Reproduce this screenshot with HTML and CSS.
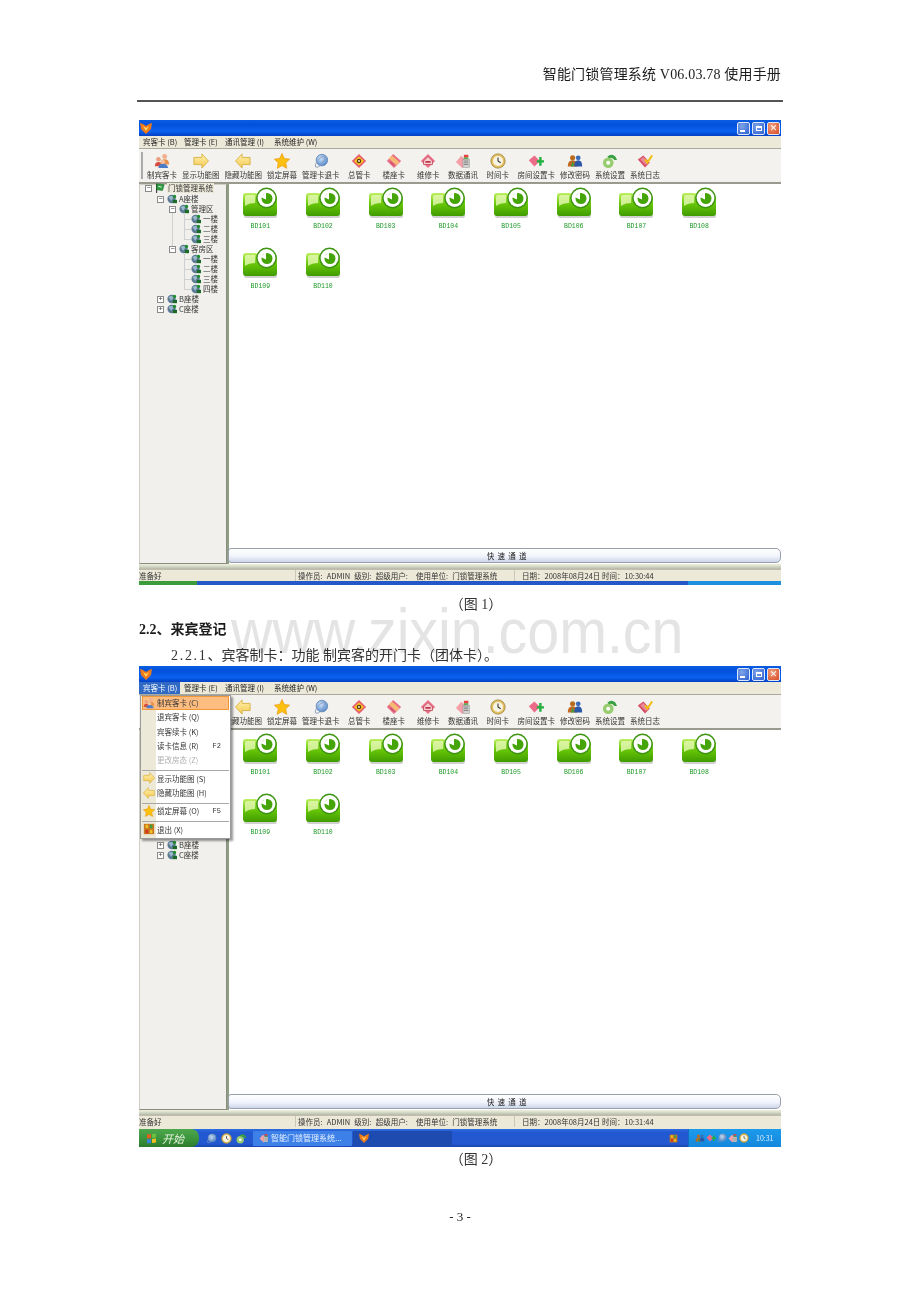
FILE: index.html
```html
<!DOCTYPE html>
<html lang="zh-CN">
<head>
<meta charset="utf-8">
<title>智能门锁管理系统 使用手册</title>
<link rel="stylesheet" href="styles.css">
</head>
<body>
<svg class="defs" width="0" height="0" aria-hidden="true">
  <defs>
    <linearGradient id="gf" x1="0" y1="0" x2="0" y2="1"><stop offset="0" stop-color="#bdf060"/><stop offset=".5" stop-color="#66c408"/><stop offset="1" stop-color="#3f9c00"/></linearGradient>
    <linearGradient id="gy" x1="0" y1="0" x2="0" y2="1"><stop offset="0" stop-color="#fff2b0"/><stop offset="1" stop-color="#f4c850"/></linearGradient>
    <radialGradient id="gg" cx=".4" cy=".35" r=".7"><stop offset="0" stop-color="#cfe4fa"/><stop offset="1" stop-color="#4c86cc"/></radialGradient>
    <symbol id="i-folder" viewBox="0 0 34 31">
      <rect x="1" y="10" width="33" height="21" rx="2" fill="#8a8a8a" opacity=".4"/>
      <path d="M0 9q0-3 3-3h9q2 0 3 2h16q3 0 3 3v15q0 3-3 3H3q-3 0-3-3z" fill="url(#gf)"/>
      <path d="M2 10q0-2 2-2h8v8q-6 0-10 3z" fill="#e6f9b4" opacity=".8"/>
      <circle cx="23.500" cy="11" r="10.400" fill="#3c9410"/>
      <circle cx="23.500" cy="11" r="8.900" fill="#fff"/>
      <circle cx="24" cy="11.500" r="5.500" fill="#45a408"/>
      <path d="M17.500 10l5.500-5v7.500z" fill="#fff"/>
    </symbol>
    <symbol id="i-people" viewBox="0 0 18 18">
      <circle cx="5" cy="7" r="2.600" fill="#e8a080"/><path d="M1 15q0-5 4-5t4 5z" fill="#d84c3c"/>
      <circle cx="12" cy="4" r="2.800" fill="#f0b090"/><path d="M7 13q0-6 5-6t5 6z" fill="#e8904c"/>
      <path d="M5 17q0-5 5-5t6 5z" fill="#4c7cc8"/><circle cx="10" cy="10" r="2.400" fill="#f0c0a0"/>
    </symbol>
    <symbol id="i-right" viewBox="0 0 18 18"><path d="M1 5h9V1l7.400 8L10 17v-4H1z" fill="url(#gy)" stroke="#d8b040" stroke-linejoin="round"/></symbol>
    <symbol id="i-left" viewBox="0 0 18 18"><path d="M17 5H8V1L.6 9 8 17v-4h9z" fill="url(#gy)" stroke="#d8b040" stroke-linejoin="round"/></symbol>
    <symbol id="i-star" viewBox="0 0 18 18"><path d="M9 .5l2.600 5.600 6 .8-4.400 4.200 1.200 6.200L9 14.200l-5.400 3.100 1.200-6.200L.4 6.900l6-.8z" fill="#fcc010" stroke="#e89000" stroke-width=".7"/></symbol>
    <symbol id="i-globe" viewBox="0 0 18 18"><circle cx="10" cy="8" r="6.500" fill="url(#gg)" stroke="#6a8cb8"/><ellipse cx="8" cy="10" rx="7.500" ry="3" fill="none" stroke="#8a9cb8" transform="rotate(-50 8 10)"/></symbol>
    <symbol id="i-eye" viewBox="0 0 18 18"><path d="M9 1l8 8-8 8-8-8z" fill="#e85c70"/><path d="M3.500 9L9 4l5.500 5L9 14z" fill="#f8c820"/><circle cx="9" cy="9" r="2.500" fill="#5c3808"/><circle cx="9" cy="9" r="1" fill="#fff"/></symbol>
    <symbol id="i-tag" viewBox="0 0 18 18"><path d="M8 1l9 8-8 8-8-8z" fill="#ea6c86"/><path d="M3 6l4-3 8 7-3 4z" fill="#f6c870" opacity=".85"/><path d="M5 10l4 4" stroke="#a83850"/></symbol>
    <symbol id="i-house" viewBox="0 0 18 18"><path d="M9 1l8 8-8 8-8-8z" fill="#ec7088"/><path d="M4 9l5-5 5 5v4H4z" fill="#f8d0d0" stroke="#b03850" stroke-width=".8"/><rect x="6" y="9" width="6" height="2" fill="#c03850"/></symbol>
    <symbol id="i-data" viewBox="0 0 18 18"><path d="M7 3l8 7-7 7-7-7z" fill="#f4a0a8"/><rect x="9" y="7" width="7" height="9" fill="#d8d8d8" stroke="#888" stroke-width=".6"/><path d="M10 9h5M10 11h5M10 13h5" stroke="#777"/><rect x="10" y="2" width="5" height="3" fill="#e84040"/><rect x="10" y="5" width="5" height="1.500" fill="#30a030"/></symbol>
    <symbol id="i-clock" viewBox="0 0 18 18"><circle cx="9" cy="9" r="8" fill="#e4c060" stroke="#a08840"/><circle cx="9" cy="9" r="5.600" fill="#f8f4e4"/><path d="M9 5v4l3 2" fill="none" stroke="#333" stroke-width="1.200"/></symbol>
    <symbol id="i-room" viewBox="0 0 20 18"><path d="M1 8l7-6 7 7-7 7z" fill="#ec6c88"/><path d="M11 8h3V4h3v4h3v3h-3v4h-3v-4h-3z" fill="#20b040"/></symbol>
    <symbol id="i-pass" viewBox="0 0 20 18"><circle cx="7" cy="5" r="3.200" fill="#b86c20"/><path d="M1 16q0-8 6-8t6 8z" fill="#c06820"/><circle cx="14" cy="5" r="3" fill="#3c6cb8"/><path d="M9 16q0-8 5-8t5 8z" fill="#2c58a8"/><path d="M5 16l2-7 2 7z" fill="#38a040"/></symbol>
    <symbol id="i-gear" viewBox="0 0 18 18"><circle cx="7" cy="11" r="6" fill="#98cc70"/><circle cx="7" cy="11" r="2.200" fill="#fff"/><path d="M6 4q5-4 9 0l2 4h-3q-3-4-6-2z" fill="#38a040"/></symbol>
    <symbol id="i-log" viewBox="0 0 20 18"><path d="M1 7l7-5 8 9-6 6z" fill="#d85068"/><path d="M4 7l4-3 6 7-3 3z" fill="#e88898"/><path d="M10 7l3 4 6-9" fill="none" stroke="#f0c010" stroke-width="2.400"/></symbol>
    <symbol id="i-node" viewBox="0 0 12 12"><circle cx="5.500" cy="6" r="5" fill="#5c7c96"/><path d="M2 4q3-3 6 0l-3 4z" fill="#9cb8cc"/><circle cx="9" cy="3" r="2" fill="#1f8c30"/><rect x="7" y="7" width="5" height="4" fill="#1a6a28"/></symbol>
    <symbol id="i-flag" viewBox="0 0 12 12"><path d="M2 1v11" stroke="#222" stroke-width="1.200"/><path d="M2 1l9 1-2 7-7-1z" fill="#2ca040" stroke="#145c20" stroke-width=".6"/><path d="M4 4l4 1" stroke="#fff"/></symbol>
    <symbol id="i-logo" viewBox="0 0 12 12"><path d="M0 1l3 1 3 2 3-2 3-1-1 6-5 5-5-5z" fill="#ee7a18"/><path d="M3 4l3 5 3-5-3 2z" fill="#ffd870"/></symbol>
    <symbol id="i-door" viewBox="0 0 14 14"><rect x="1" y="1" width="12" height="12" fill="#c87820"/><rect x="3" y="2" width="3" height="4" fill="#f0c020"/><rect x="8" y="2" width="3" height="4" fill="#38a040"/><rect x="3" y="8" width="3" height="4" fill="#d83020"/><rect x="8" y="8" width="3" height="4" fill="#f0c020"/></symbol>
  </defs>
</svg>

<div class="watermark">www.zixin.com.cn</div>

<main class="page">
  <header class="doc-head">智能门锁管理系统 V06.03.78 使用手册</header>

  <section class="win win-one">
    <div class="title"><svg class="logo"><use href="#i-logo"/></svg><div class="caps"><span class="cap cap-blue"><i class="g-min"></i></span><span class="cap cap-blue"><i class="g-max"></i></span><span class="cap cap-red">✕</span></div></div>
    <nav class="menubar"><span>宾客卡 (B)</span><span>管理卡 (E)</span><span>通讯管理 (I)</span><span>系统维护 (W)</span></nav>
    <div class="toolbar">
      <div class="tool"><svg><use href="#i-people"/></svg>制宾客卡</div>
      <div class="tool"><svg><use href="#i-right"/></svg>显示功能图</div>
      <div class="tool"><svg><use href="#i-left"/></svg>隐藏功能图</div>
      <div class="tool"><svg><use href="#i-star"/></svg>锁定屏幕</div>
      <div class="tool"><svg><use href="#i-globe"/></svg>管理卡退卡</div>
      <div class="tool"><svg><use href="#i-eye"/></svg>总管卡</div>
      <div class="tool"><svg><use href="#i-tag"/></svg>楼座卡</div>
      <div class="tool"><svg><use href="#i-house"/></svg>维修卡</div>
      <div class="tool"><svg><use href="#i-data"/></svg>数据通讯</div>
      <div class="tool"><svg><use href="#i-clock"/></svg>时间卡</div>
      <div class="tool"><svg><use href="#i-room"/></svg>房间设置卡</div>
      <div class="tool"><svg><use href="#i-pass"/></svg>修改密码</div>
      <div class="tool"><svg><use href="#i-gear"/></svg>系统设置</div>
      <div class="tool"><svg><use href="#i-log"/></svg>系统日志</div>
    </div>
    <div class="body">
      <aside class="tree">
        <div class="row root"><b class="box">−</b><svg><use href="#i-flag"/></svg><span class="sel">门锁管理系统</span></div>
        <ul class="lv">
          <li><div class="row"><b class="box">−</b><svg><use href="#i-node"/></svg>A座楼</div>
            <ul class="lv">
              <li class="spine"><div class="row"><b class="box">−</b><svg><use href="#i-node"/></svg>管理区</div>
                <ul class="lv leafs"><li><div class="row"><svg><use href="#i-node"/></svg>一楼</div></li><li><div class="row"><svg><use href="#i-node"/></svg>二楼</div></li><li><div class="row"><svg><use href="#i-node"/></svg>三楼</div></li></ul>
              </li>
              <li><div class="row"><b class="box">−</b><svg><use href="#i-node"/></svg>客房区</div>
                <ul class="lv leafs"><li><div class="row"><svg><use href="#i-node"/></svg>一楼</div></li><li><div class="row"><svg><use href="#i-node"/></svg>二楼</div></li><li><div class="row"><svg><use href="#i-node"/></svg>三楼</div></li><li><div class="row"><svg><use href="#i-node"/></svg>四楼</div></li></ul>
              </li>
            </ul>
          </li>
          <li><div class="row"><b class="box">+</b><svg><use href="#i-node"/></svg>B座楼</div></li>
          <li><div class="row"><b class="box">+</b><svg><use href="#i-node"/></svg>C座楼</div></li>
        </ul>
      </aside>
      <div class="right">
        <div class="grid">
          <div class="lock"><svg><use href="#i-folder"/></svg>BD101</div>
          <div class="lock"><svg><use href="#i-folder"/></svg>BD102</div>
          <div class="lock"><svg><use href="#i-folder"/></svg>BD103</div>
          <div class="lock"><svg><use href="#i-folder"/></svg>BD104</div>
          <div class="lock"><svg><use href="#i-folder"/></svg>BD105</div>
          <div class="lock"><svg><use href="#i-folder"/></svg>BD106</div>
          <div class="lock"><svg><use href="#i-folder"/></svg>BD107</div>
          <div class="lock"><svg><use href="#i-folder"/></svg>BD108</div>
          <div class="lock"><svg><use href="#i-folder"/></svg>BD109</div>
          <div class="lock"><svg><use href="#i-folder"/></svg>BD110</div>
        </div>
        <div class="quick">快 速 通 道</div>
      </div>
    </div>
    <footer class="status"><span class="st-a">准备好</span><span class="st-b">操作员: ADMIN 级别: 超级用户:&nbsp; 使用单位: 门锁管理系统</span><span class="st-c">日期：2008年08月24日 时间：10:30:44</span></footer>
    <div class="strip"><i class="s-green"></i><i class="s-blue"></i><i class="s-light"></i></div>
  </section>

  <p class="caption cap-one">（图 1）</p>
  <h2 class="sec">2.2、来宾登记</h2>
  <p class="para"><span class="num">2.2.1</span>、宾客制卡：功能 制宾客的开门卡（团体卡）。</p>

  <section class="win win-two">
    <div class="title"><svg class="logo"><use href="#i-logo"/></svg><div class="caps"><span class="cap cap-blue"><i class="g-min"></i></span><span class="cap cap-blue"><i class="g-max"></i></span><span class="cap cap-red">✕</span></div></div>
    <nav class="menubar"><span class="on">宾客卡 (B)</span><span>管理卡 (E)</span><span>通讯管理 (I)</span><span>系统维护 (W)</span></nav>
    <div class="toolbar">
      <div class="tool"><svg><use href="#i-people"/></svg><span class="under">制宾客卡</span></div>
      <div class="tool"><svg><use href="#i-right"/></svg><span class="under">显示功能图</span></div>
      <div class="tool"><svg><use href="#i-left"/></svg>隐藏功能图</div>
      <div class="tool"><svg><use href="#i-star"/></svg>锁定屏幕</div>
      <div class="tool"><svg><use href="#i-globe"/></svg>管理卡退卡</div>
      <div class="tool"><svg><use href="#i-eye"/></svg>总管卡</div>
      <div class="tool"><svg><use href="#i-tag"/></svg>楼座卡</div>
      <div class="tool"><svg><use href="#i-house"/></svg>维修卡</div>
      <div class="tool"><svg><use href="#i-data"/></svg>数据通讯</div>
      <div class="tool"><svg><use href="#i-clock"/></svg>时间卡</div>
      <div class="tool"><svg><use href="#i-room"/></svg>房间设置卡</div>
      <div class="tool"><svg><use href="#i-pass"/></svg>修改密码</div>
      <div class="tool"><svg><use href="#i-gear"/></svg>系统设置</div>
      <div class="tool"><svg><use href="#i-log"/></svg>系统日志</div>
    </div>
    <div class="body">
      <aside class="tree">
        <div class="row root under"><b class="box">−</b><svg><use href="#i-flag"/></svg><span class="sel">门锁管理系统</span></div>
        <ul class="lv">
          <li class="under"><div class="row"><b class="box">−</b><svg><use href="#i-node"/></svg>A座楼</div>
            <ul class="lv">
              <li class="spine"><div class="row"><b class="box">−</b><svg><use href="#i-node"/></svg>管理区</div>
                <ul class="lv leafs"><li><div class="row"><svg><use href="#i-node"/></svg>一楼</div></li><li><div class="row"><svg><use href="#i-node"/></svg>二楼</div></li><li><div class="row"><svg><use href="#i-node"/></svg>三楼</div></li></ul>
              </li>
              <li><div class="row"><b class="box">−</b><svg><use href="#i-node"/></svg>客房区</div>
                <ul class="lv leafs"><li><div class="row"><svg><use href="#i-node"/></svg>一楼</div></li><li><div class="row"><svg><use href="#i-node"/></svg>二楼</div></li><li><div class="row"><svg><use href="#i-node"/></svg>三楼</div></li><li><div class="row"><svg><use href="#i-node"/></svg>四楼</div></li></ul>
              </li>
            </ul>
          </li>
          <li><div class="row"><b class="box">+</b><svg><use href="#i-node"/></svg>B座楼</div></li>
          <li><div class="row"><b class="box">+</b><svg><use href="#i-node"/></svg>C座楼</div></li>
        </ul>
      </aside>
      <div class="right">
        <div class="grid">
          <div class="lock"><svg><use href="#i-folder"/></svg>BD101</div>
          <div class="lock"><svg><use href="#i-folder"/></svg>BD102</div>
          <div class="lock"><svg><use href="#i-folder"/></svg>BD103</div>
          <div class="lock"><svg><use href="#i-folder"/></svg>BD104</div>
          <div class="lock"><svg><use href="#i-folder"/></svg>BD105</div>
          <div class="lock"><svg><use href="#i-folder"/></svg>BD106</div>
          <div class="lock"><svg><use href="#i-folder"/></svg>BD107</div>
          <div class="lock"><svg><use href="#i-folder"/></svg>BD108</div>
          <div class="lock"><svg><use href="#i-folder"/></svg>BD109</div>
          <div class="lock"><svg><use href="#i-folder"/></svg>BD110</div>
        </div>
        <div class="quick">快 速 通 道</div>
      </div>
    </div>
    <footer class="status"><span class="st-a">准备好</span><span class="st-b">操作员: ADMIN 级别: 超级用户:&nbsp; 使用单位: 门锁管理系统</span><span class="st-c">日期：2008年08月24日 时间：10:31:44</span></footer>
    <div class="taskbar">
      <div class="start"><span class="flag"><i></i><i></i><i></i><i></i></span>开始</div>
      <div class="quicklaunch"><svg><use href="#i-globe"/></svg><svg><use href="#i-clock"/></svg><svg><use href="#i-gear"/></svg></div>
      <div class="task"><svg><use href="#i-data"/></svg>智能门锁管理系统...</div>
      <div class="task task-dark"><svg class="logo"><use href="#i-logo"/></svg></div>
      <svg class="tb-qr"><use href="#i-door"/></svg>
      <div class="tray"><svg><use href="#i-pass"/></svg><svg><use href="#i-room"/></svg><svg><use href="#i-globe"/></svg><svg><use href="#i-data"/></svg><svg><use href="#i-clock"/></svg><span>10:31</span></div>
    </div>
    <div class="menu">
      <div class="mi hot"><svg><use href="#i-people"/></svg><span>制宾客卡 (C)</span></div>
      <div class="mi"><span>退宾客卡 (Q)</span></div>
      <div class="mi"><span>宾客续卡 (K)</span></div>
      <div class="mi"><span>读卡信息 (R)</span><kbd>F2</kbd></div>
      <div class="mi off"><span>更改房态 (Z)</span></div>
      <hr class="msep">
      <div class="mi"><svg><use href="#i-right"/></svg><span>显示功能图 (S)</span></div>
      <div class="mi"><svg><use href="#i-left"/></svg><span>隐藏功能图 (H)</span></div>
      <hr class="msep">
      <div class="mi"><svg><use href="#i-star"/></svg><span>锁定屏幕 (O)</span><kbd>F5</kbd></div>
      <hr class="msep">
      <div class="mi"><svg><use href="#i-door"/></svg><span>退出 (X)</span></div>
    </div>
  </section>

  <p class="caption cap-two">（图 2）</p>
  <p class="pageno">- 3 -</p>
</main>
</body>
</html>
```

FILE: styles.css
```css
* { box-sizing: border-box; }
html, body { margin: 0; padding: 0; background: #fff; }
body { font-family: "Liberation Serif", "Noto Sans CJK SC", serif; color: #1c1c1c; }
.defs { position: absolute; }
ul { list-style: none; margin: 0; padding: 0; }
p, h2 { margin: 0; }

.page { width: 920px; height: 1302px; padding: 0 139px; overflow: hidden; }
.watermark { position: absolute; left: 231px; top: 595px; font: 400 63px/72px "Liberation Sans", sans-serif; color: #e4e4e4; transform: scaleX(.91); transform-origin: left top; z-index: 5; mix-blend-mode: multiply; }

.doc-head { height: 120px; padding-top: 66px; line-height: 18px; text-align: right; font-size: 14px; letter-spacing: .18px; position: relative; }
.doc-head::after { content: ""; position: absolute; left: -2px; right: -2px; top: 100px; height: 2px; background: #555; }

/* application window */
.win { position: relative; width: 642px; font-family: "Noto Sans CJK SC", sans-serif; font-size: 7.500px; line-height: 10px; background: #ece9d8; filter: blur(.4px); }
.title { height: 16px; background: linear-gradient(#0a5ce0, #0350dc 30%, #0a62ee 70%, #0340c4); display: flex; align-items: center; padding-left: 1px; justify-content: space-between; }
.logo { width: 12px; height: 12px; }
.caps { display: flex; gap: 2px; padding-right: 1px; }
.cap { width: 13px; height: 13px; border: 1px solid #dfe8f8; border-radius: 2px; display: flex; align-items: center; justify-content: center; color: #fff; font: 700 9px/1 "DejaVu Sans", sans-serif; }
.cap-blue { background: radial-gradient(circle at 35% 30%, #7fa4ea, #2b5fd0); }
.cap-red { background: radial-gradient(circle at 35% 30%, #f0a080, #d84820); }
.g-min { width: 5px; height: 2px; background: #fff; margin: 6px 3px 0 0; }
.g-max { width: 6px; height: 5px; border: 1px solid #fff; border-top-width: 2px; }

.menubar { height: 13px; display: flex; align-items: center; background: #ece9d8; border-bottom: 1px solid #aaa99f; color: #222; }
.menubar span { padding: 0 4px; height: 12px; line-height: 12px; white-space: nowrap; }
.menubar span:first-child { width: 41px; }
.menubar span:nth-child(2) { width: 41px; }
.menubar span:nth-child(3) { width: 49px; }
.menubar .on { background: #316ac5; color: #fff; }

.toolbar { height: 35px; padding-left: 8px; display: flex; gap: 5px; background: #f3f2ee; border-bottom: 2px solid #9a9a8e; position: relative; }
.toolbar::before { content: ""; position: absolute; left: 2px; top: 3px; bottom: 3px; width: 2px; background: #aaa; }
.tool { min-width: 29.500px; display: flex; flex-direction: column; align-items: center; white-space: nowrap; padding-top: 4px; color: #333; }
.tool svg { width: 16px; height: 16px; margin-bottom: 1px; }
.under { visibility: hidden; }

.body { display: flex; height: 380px; background: #dfe8d4; }
.tree { width: 88px; background: #f1f0ec; border: 1px solid #cfcfc4; border-right-color: #8c8c80; border-bottom-color: #8c8c80; padding: 0 0 0 5px; color: #333; }
.row { height: 10px; display: flex; align-items: center; white-space: nowrap; line-height: 10px; position: relative; }
.root { height: 12px; margin-top: -3px; }
.row svg { width: 10px; height: 10px; margin-right: 2px; flex: none; }
.box { width: 7px; height: 7px; border: 1px solid #8a8a8a; background: #fff; font: 400 7px/5px "Liberation Mono", monospace; text-align: center; margin-right: 3px; flex: none; color: #333; overflow: hidden; position: relative; z-index: 1; }
.sel { background: #ece9d8; padding: 0 1px; }
.lv { padding-left: 12px; }
.spine { position: relative; }
.spine::before { content: ""; position: absolute; left: 3px; top: 5px; bottom: -5px; border-left: 1px solid #d0d0d0; }
.leafs { padding-left: 22px; position: relative; }
.leafs::before { content: ""; position: absolute; left: 15px; top: 0; bottom: 5px; border-left: 1px solid #d0d0d0; }
.leafs .row::before { content: ""; position: absolute; left: -7px; width: 7px; border-top: 1px solid #d0d0d0; top: 5px; }

.right { flex: 1; display: flex; flex-direction: column; background: #fff; border-left: 2px solid #8f9f84; }
.grid { flex: 1; display: grid; grid-template-columns: repeat(8, 62.700px); grid-auto-rows: 60px; align-content: start; padding-top: 3px; }
.lock { display: flex; flex-direction: column; align-items: center; font: 400 6.500px/10px "Liberation Mono", monospace; color: #1e9a28; }
.lock svg { width: 34px; height: 31px; margin-bottom: 4px; flex: none; }
.quick { height: 15px; margin: 0 0 1px -1px; border: 1px solid #9aa0aa; border-radius: 3px 5px 5px 3px; background: linear-gradient(#fff, #f1f4fb 55%, #cdd6ea); text-align: center; line-height: 13px; letter-spacing: .8px; color: #222; padding-left: 5px; }

.status { margin-top: 5px; height: 12px; display: flex; background: #ece9d8; border-top: 1px solid #bdbcae; color: #333; line-height: 11px; font-size: 7.500px; white-space: nowrap; position: relative; }
.status::before { content: ""; position: absolute; left: 0; right: 0; top: -5px; height: 4px; background: linear-gradient(#e2ebd8, #b8b8a8); }
.st-a { width: 156px; }
.st-b { width: 219px; padding-left: 2px; border-left: 1px solid #c8c7b8; word-spacing: 2.500px; }
.st-c { flex: 1; padding-left: 7px; border-left: 1px solid #c8c7b8; }

.strip { height: 4px; display: flex; }
.strip i { display: block; height: 4px; }
.s-green { width: 58px; background: #3c9c3c; }
.s-blue { flex: 1; background: #2458c8; }
.s-light { width: 93px; background: #1f90e0; }

.taskbar { height: 18px; margin-top: 2px; display: flex; align-items: center; background: linear-gradient(#2e6de0, #2158d2 20%, #2458d0 80%, #1a45b0); color: #fff; }
.start { width: 60px; height: 18px; background: linear-gradient(#4da84d, #3a923a 60%, #2c7a2c); border-radius: 0 8px 8px 0; display: flex; align-items: center; gap: 6px; padding-left: 8px; font: italic 400 11px/18px "Noto Sans CJK SC", sans-serif; color: #e8f4e0; }
.flag { display: grid; grid-template-columns: 4px 4px; gap: 1px; transform: skewY(-6deg); }
.flag i { width: 4px; height: 4px; background: #e85c20; }
.flag i:nth-child(2) { background: #6cc040; }
.flag i:nth-child(3) { background: #3c80e0; }
.flag i:nth-child(4) { background: #f0c020; }
.quicklaunch { display: flex; gap: 4px; margin-left: 7px; width: 47px; }
.quicklaunch svg { width: 11px; height: 11px; }
.task { width: 99px; height: 15px; margin-right: 1px; background: #3c80e8; display: flex; align-items: center; gap: 2px; padding-left: 6px; border-radius: 1px; color: #e8f0ff; font-size: 8px; white-space: nowrap; }
.task svg { width: 10px; height: 10px; }
.task-dark { background: #1e4bb0; }
.tb-qr { width: 9px; height: 11px; margin-left: auto; margin-right: 10px; }
.tray { width: 93px; height: 18px; background: linear-gradient(#1c9aec, #1488dc); display: flex; align-items: center; gap: 1px; padding-left: 6px; border-left: 1px solid #0f6cc0; }
.tray svg { width: 10px; height: 10px; flex: none; }
.tray span { margin-left: 6px; font-size: 7px; color: #d8ecff; }

.menu { position: absolute; left: 1px; top: 29px; width: 91px; height: 144px; background: linear-gradient(90deg, #ece9d8 15px, #fff 15px); border: 1px solid #9a9a9a; box-shadow: 2px 2px 2px rgba(0,0,0,.4); padding: 0 1px; z-index: 3; color: #333; }
.mi { height: 14.300px; display: flex; align-items: center; padding-left: 15px; position: relative; white-space: nowrap; }
.mi svg { position: absolute; left: 1px; top: 1px; width: 12px; height: 12px; }
.mi kbd { font: 400 7px/10px "Liberation Mono", monospace; margin-left: auto; margin-right: 8px; }
.hot { background: #fdbd80; outline: 1px solid #f09838; outline-offset: -1px; }
.off { color: #b0b0b0; }
.msep { border: 0; border-top: 1px solid #a8a8a8; margin: 2.500px 0 .5px; }

/* document text */
.caption { text-align: center; font-size: 14px; line-height: 16px; color: #333; padding-left: 32px; }
.cap-one { margin-top: 12px; }
.sec { font-size: 14px; font-weight: 700; line-height: 18px; margin-top: 8px; }
.para { font-size: 14px; line-height: 18px; margin-top: 8px; padding-left: 32px; color: #333; }
.num { letter-spacing: 1.700px; }
.win-two { margin-top: 1px; }
.cap-two { margin-top: 5px; }
.pageno { text-align: center; font-size: 13px; line-height: 16px; margin-top: 41px; }
```
